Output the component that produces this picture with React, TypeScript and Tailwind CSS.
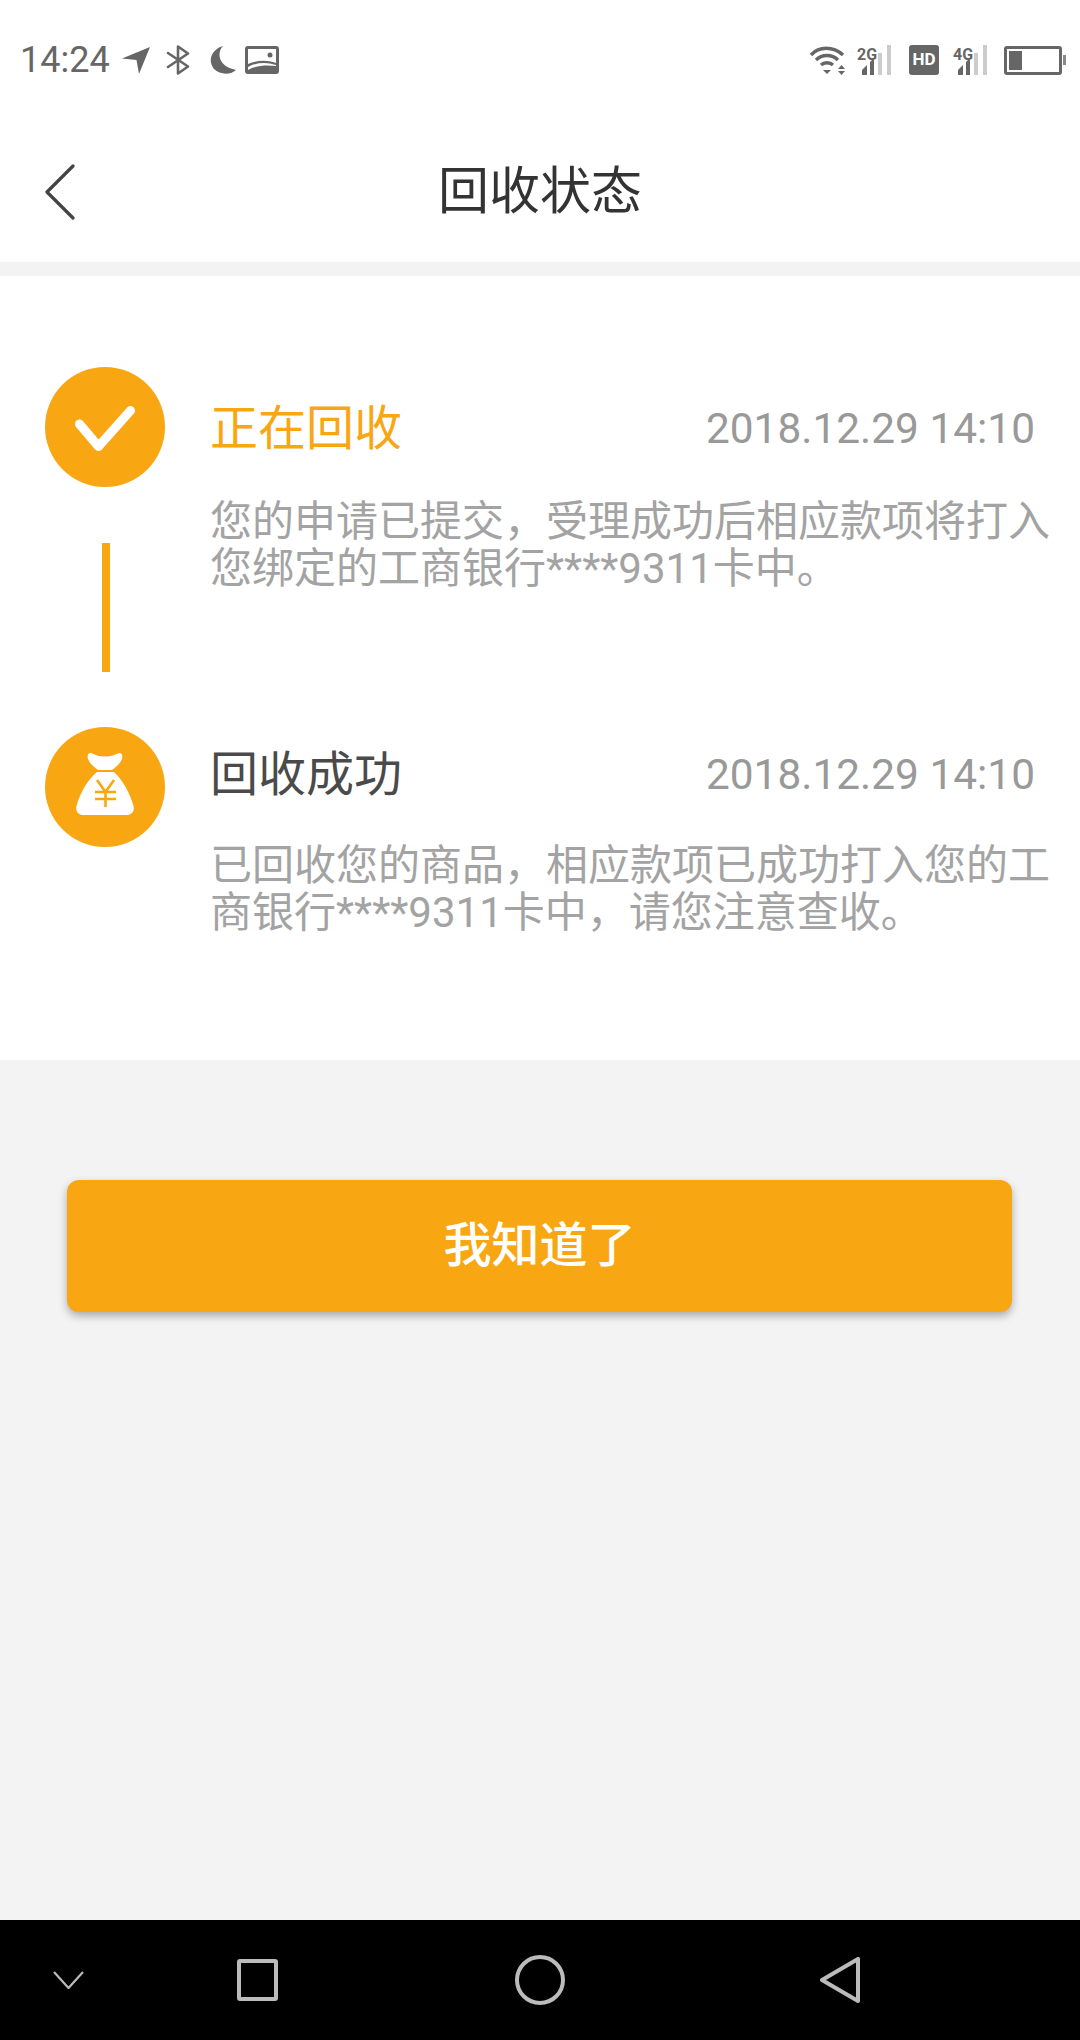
const font = { fontFamily: '"Roboto", "Noto Sans CJK SC", sans-serif' };

function SignalIcon({ label }: { label: string }) {
  return (
    <svg width="36" height="30" viewBox="0 0 36 30">
      <text x="1" y="15" fontSize="16" fontWeight="700" fill="#666" fontFamily="Roboto, sans-serif">
        {label}
      </text>
      <path d="M6 30V25L11 20V30Z" fill="#666" />
      <path d="M14 30V17L18 13V30Z" fill="#666" />
      <rect x="22" y="8" width="4" height="22" fill="#ccc" />
      <rect x="31" y="0" width="4" height="30" fill="#ccc" />
    </svg>
  );
}

function StatusBar() {
  return (
    <div className="flex h-[120px] items-start justify-between pl-[20px] pr-[14px] pt-[45px]">
      <div className="flex items-center">
        <span className="text-[36px] leading-[30px] text-[#666]">14:24</span>
        {/* location */}
        <svg className="ml-[12px]" width="28" height="28" viewBox="0 0 28 28">
          <path d="M0 12.5L28 1L17 28L14.5 14Z" fill="#666" />
        </svg>
        {/* bluetooth */}
        <svg className="ml-[16px]" width="24" height="30" viewBox="0 0 24 30" fill="none" stroke="#666" strokeWidth="2.6" strokeLinejoin="round" strokeLinecap="round">
          <path d="M2 8L22 21.5L12 28.5V1.5L22 8.5L2 22" />
        </svg>
        {/* moon */}
        <svg className="ml-[20px]" width="26" height="28" viewBox="0 0 26 28">
          <path d="M13 0C7 6 7 20 26 24C21 29 10 29 4 23C-2 16 0 4 13 0Z" fill="#666" />
        </svg>
        {/* picture */}
        <svg className="ml-[9px]" width="34" height="28" viewBox="0 0 34 28">
          <rect width="34" height="28" rx="3" fill="#666" />
          <path d="M3 3H31V17C22 14 12 14 3 18Z" fill="#fff" />
          <path d="M3 21C12 16 22 16 31 19V20C22 19 12 19 3 24Z" fill="#fff" />
          <circle cx="25" cy="9" r="2.5" fill="#666" />
        </svg>
      </div>
      <div className="flex items-center">
        {/* wifi */}
        <svg width="36" height="30" viewBox="0 0 36 30" fill="none" stroke="#666" strokeWidth="3.4">
          <path d="M1 10C9 1 23 1 33 10" />
          <path d="M6 15C12 9 22 9 28 15" />
          <path d="M11 20C14 17 20 17 23 20" />
          <path d="M13 25H21L17 29Z" fill="#666" stroke="none" />
          <path d="M28 24L31.5 20L35 24ZM28 26L31.5 30L35 26Z" fill="#666" stroke="none" />
        </svg>
        <div className="ml-[10px]">
          <SignalIcon label="2G" />
        </div>
        <div className="ml-[17px] flex h-[30px] w-[30px] items-center justify-center rounded-[3px] bg-[#666] text-[17px] font-bold text-white">
          HD
        </div>
        <div className="ml-[13px]">
          <SignalIcon label="4G" />
        </div>
        <div className="ml-[16px] flex items-center">
          <div className="flex h-[29px] w-[58px] items-stretch rounded-[3px] border-[3px] border-[#666] p-[2px]">
            <div className="w-[13px] bg-[#666]" />
          </div>
          <div className="ml-[1px] h-[10px] w-[3px] bg-[#888]" />
        </div>
      </div>
    </div>
  );
}

function Header() {
  return (
    <div className="relative flex h-[142px] items-start justify-center">
      <svg className="absolute left-[44px] top-[44px]" width="32" height="56" viewBox="0 0 32 56" fill="none" stroke="#444" strokeWidth="3.2" strokeLinecap="round" strokeLinejoin="round">
        <path d="M29 2L3 28L29 54" />
      </svg>
      <h1 className="mt-[37px] text-[51px] leading-[70px] font-normal text-[#333]">回收状态</h1>
    </div>
  );
}

function Step({
  icon,
  title,
  titleColor,
  titleHeight,
  descGap,
  desc,
  children,
}: {
  icon: React.ReactNode;
  title: string;
  titleColor: string;
  titleHeight: string;
  descGap: string;
  desc: string;
  children?: React.ReactNode;
}) {
  return (
    <div className="flex">
      <div className="flex w-[120px] shrink-0 flex-col items-center">
        <div className="flex h-[120px] w-[120px] items-center justify-center rounded-full bg-[#f9a613]">{icon}</div>
        {children}
      </div>
      <div className="ml-[45px] w-[850px]">
        <div className={`flex items-center justify-between pr-[25px] ${titleHeight}`}>
          <span className={`text-[48px] ${titleColor}`}>{title}</span>
          <span className="text-[42.4px] text-[#999]">2018.12.29 14:10</span>
        </div>
        <p className={`text-[42px] leading-[47px] text-[#a3a3a3] ${descGap}`}>{desc}</p>
      </div>
    </div>
  );
}

export default function App() {
  return (
    <div className="flex h-[2040px] w-[1080px] flex-col bg-[#f3f3f3]" style={font}>
      <div className="bg-white">
        <StatusBar />
        <Header />
      </div>

      <div className="mt-[14px] h-[784px] bg-white pl-[45px] pt-[91px]">
        <Step
          icon={
            <svg className="mt-[4px]" width="60" height="46" viewBox="0 0 60 46" fill="none" stroke="#fff" strokeWidth="9" strokeLinecap="round" strokeLinejoin="round">
              <path d="M4.5 18L23.5 40.5L55.5 4.5" />
            </svg>
          }
          title="正在回收"
          titleColor="text-[#f9a613]"
          titleHeight="h-[123px]"
          descGap="mt-[8px]"
          desc="您的申请已提交，受理成功后相应款项将打入您绑定的工商银行****9311卡中。"
        >
          <div className="mb-[55px] ml-[2px] mt-[56px] h-[129px] w-[8px] bg-[#f9a613]" />
        </Step>
        <Step
          icon={
            <svg className="mb-[6px]" width="58" height="62" viewBox="0 0 58 62">
              <path d="M15 0C21 3 26 3.5 29 3.5C32 3.5 37 3 43 0C46 -0.5 47 3 46 6C44 11 40 14 36 17H22C18 14 14 11 12 6C11 3 12 -0.5 15 0Z" fill="#fff" />
              <path d="M21 19H38C46 26 54 40 57.5 53C59 58 55 62 51 62H7C3 62 -1 58 0.5 53C4 40 12 26 21 19Z" fill="#fff" />
              <path d="M21 27L29.5 39L38 27M19 39H40M19 46H40M29.5 39V54" fill="none" stroke="#f9a613" strokeWidth="2.6" />
            </svg>
          }
          title="回收成功"
          titleColor="text-[#4a4a4a]"
          titleHeight="h-[95px]"
          descGap="mt-[20px]"
          desc="已回收您的商品，相应款项已成功打入您的工商银行****9311卡中，请您注意查收。"
        />
      </div>

      <button className="ml-[67px] mr-[68px] mt-[120px] h-[132px] rounded-[12px] bg-[#f9a613] text-[48px] font-medium text-white shadow-[0_4px_8px_rgba(0,0,0,0.3)]">
        我知道了
      </button>

      <div className="mt-auto flex h-[120px] items-center bg-black pl-[53px]">
        <svg width="31" height="18" viewBox="0 0 31 18" fill="none" stroke="#bbb" strokeWidth="2.2">
          <path d="M1 1L15.5 17L30 1" />
        </svg>
        <div className="ml-[153px] h-[42px] w-[41px] rounded-[3px] border-[4px] border-[#bbb]" />
        <div className="ml-[237px] h-[50px] w-[50px] rounded-full border-[4px] border-[#bbb]" />
        <svg className="ml-[255px]" width="40" height="46" viewBox="0 0 40 46" fill="none" stroke="#bbb" strokeWidth="4" strokeLinejoin="round">
          <path d="M38 2V44L2 23Z" />
        </svg>
      </div>
    </div>
  );
}
